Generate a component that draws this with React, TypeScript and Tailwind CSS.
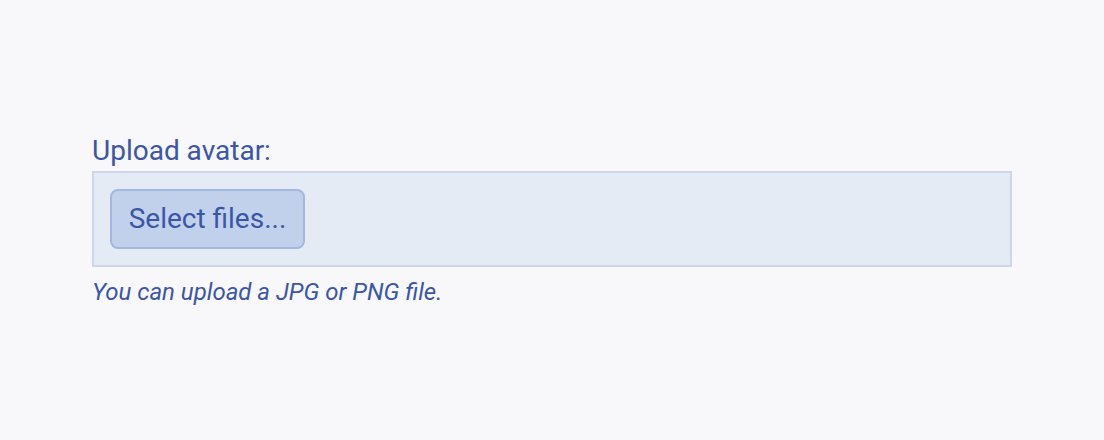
export default function App() {
  return (
    <div className="min-h-screen bg-[#f8f8fb] flex items-center justify-center font-['Roboto',sans-serif]">
      <div className="w-[920px] flex flex-col">
        <label className="text-[28px] leading-[40px] text-[#3b55a8]">Upload avatar:</label>
        <div className="border-2 border-[#cdd6ea] bg-[#e4ebf5] p-4">
          <button className="w-[195px] h-[60px] rounded-lg border-2 border-[#a5b6e0] bg-[#c1d1eb] text-[28px] text-[#3b55a8] flex items-center justify-center">
            Select files...
          </button>
        </div>
        <p className="mt-2 text-[24px] leading-[34px] italic text-[#3b55a8]">You can upload a JPG or PNG file.</p>
      </div>
    </div>
  );
}
